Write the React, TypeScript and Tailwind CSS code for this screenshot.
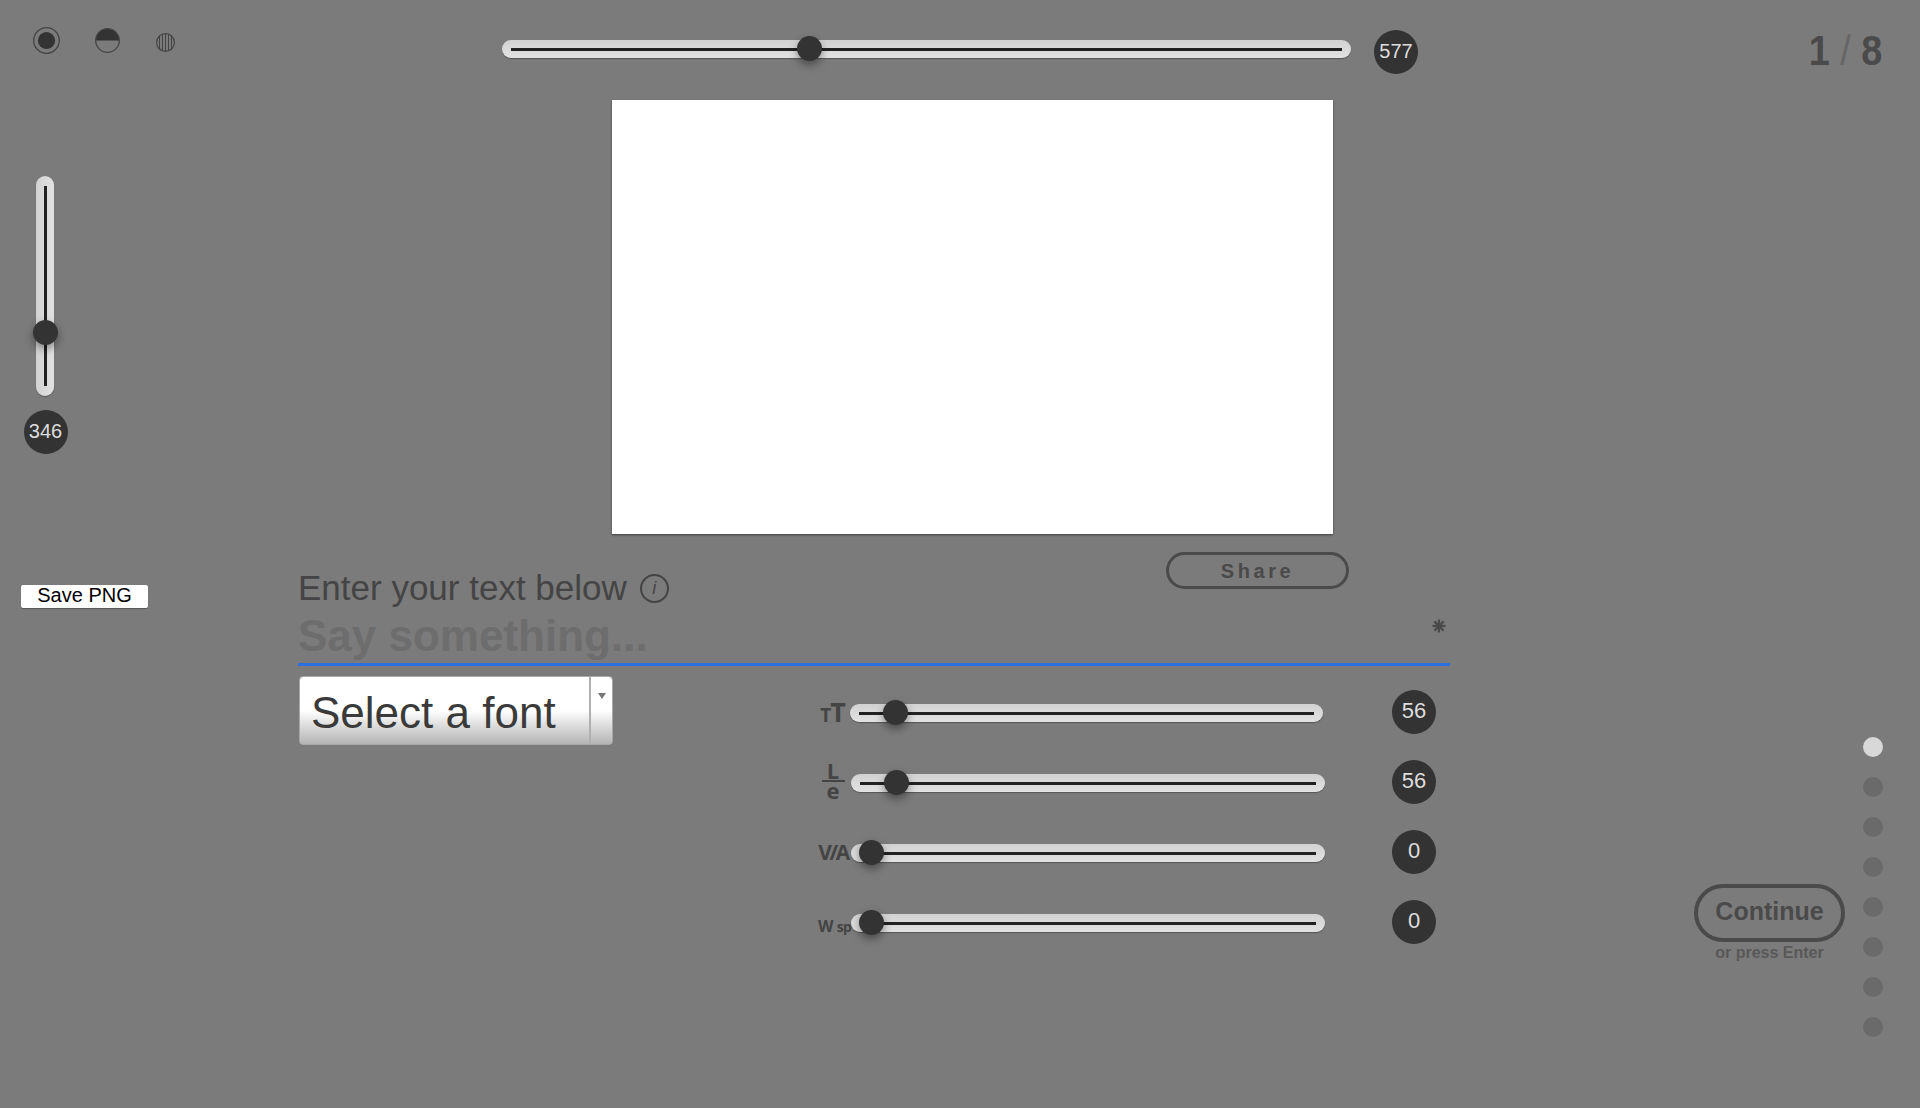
const Bubble = ({ value, small }: { value: string; small?: boolean }) => (
  <div
    className={`flex h-11 w-11 shrink-0 items-center justify-center rounded-full bg-[#333333] pb-[3px] text-[#dddddd] ${
      small ? "text-[20px]" : "text-[22px]"
    }`}
  >
    {value}
  </div>
);

const Knob = ({ className }: { className: string }) => (
  <div className={`absolute h-[25px] w-[25px] rounded-full bg-[#333333] shadow-[0_4px_9px_rgba(0,0,0,0.4)] ${className}`} />
);

const HSlider = ({ width, knob }: { width: string; knob: string }) => (
  <div className={`relative flex h-[18px] shrink-0 items-center rounded-full bg-[linear-gradient(#d2d2d2,#e2e2e2)] px-[9px] shadow-[0_1px_1px_rgba(0,0,0,0.3)] ${width}`}>
    <div className="h-[3px] w-full bg-[#222222]" />
    <Knob className={`top-[-4px] ${knob}`} />
  </div>
);

const ModeIcons = () => (
  <div className="flex items-start pl-[33px] pt-[27px]">
    <svg width="27" height="27" viewBox="0 0 27 27">
      <circle cx="13.5" cy="13.5" r="12.8" fill="none" stroke="#444444" strokeWidth="1.3" />
      <circle cx="13.5" cy="13.5" r="8.6" fill="#333333" />
    </svg>
    <svg className="ml-[35px] mt-px" width="25" height="25" viewBox="0 0 25 25">
      <path d="M0.7 12.5a11.8 11.8 0 0 1 23.6 0z" fill="#333333" />
      <circle cx="12.5" cy="12.5" r="11.8" fill="none" stroke="#444444" strokeWidth="1.3" />
    </svg>
    <svg className="ml-9 mt-[6px]" width="19" height="19" viewBox="0 0 19 19">
      <g stroke="#444444" strokeWidth="1">
        <line x1="3.5" y1="2" x2="3.5" y2="17" />
        <line x1="6.5" y1="1" x2="6.5" y2="18" />
        <line x1="9.5" y1="0.5" x2="9.5" y2="18.5" />
        <line x1="12.5" y1="1" x2="12.5" y2="18" />
        <line x1="15.5" y1="2" x2="15.5" y2="17" />
      </g>
      <circle cx="9.5" cy="9.5" r="8.9" fill="none" stroke="#444444" strokeWidth="1.2" />
    </svg>
  </div>
);

const LeftRail = () => (
  <div className="w-[298px] shrink-0">
    <ModeIcons />
    <div className="relative ml-9 mt-[122px] flex h-[220px] w-[18px] justify-center rounded-full bg-[linear-gradient(90deg,#d2d2d2,#e2e2e2)] py-[10px] shadow-[0_1px_1px_rgba(0,0,0,0.3)]">
      <div className="h-full w-[3px] bg-[#222222]" />
      <Knob className="left-[-3.5px] top-[143.5px]" />
    </div>
    <div className="ml-[23.5px] mt-[14px]">
      <Bubble value="346" small />
    </div>
    <button className="ml-[21px] mt-[131px] block h-[23px] w-[127px] rounded-[2px] bg-white pb-[3px] text-[20px] leading-[20px] text-black shadow-[0_1px_1px_rgba(0,0,0,0.3)]">
      Save PNG
    </button>
  </div>
);

const rows = [
  {
    label: (
      <div className="flex items-baseline justify-center pb-px font-['Open_Sans',sans-serif] font-bold leading-none">
        <span className="text-[19px]">T</span>
        <span className="ml-[-1px] text-[27px]">T</span>
      </div>
    ),
    value: "56",
    track: "w-[473px]",
    knob: "left-[33px]",
    gap: "ml-[69px]",
    offset: "",
  },
  {
    label: (
      <div className="flex flex-col items-center pb-[5px] font-['Open_Sans',sans-serif] font-bold">
        <span className="text-[22px] leading-[19px]">L</span>
        <div className="h-0.5 w-[23px] bg-[#444444]" />
        <span className="text-[22px] leading-[16px]">e</span>
      </div>
    ),
    value: "56",
    track: "w-[474px]",
    knob: "left-[33px]",
    gap: "ml-[67px]",
    offset: "ml-px",
  },
  {
    label: (
      <div className="whitespace-nowrap text-center font-['Open_Sans',sans-serif] text-[21px] font-bold leading-none tracking-[-2.5px]">V/A</div>
    ),
    value: "0",
    track: "w-[474px]",
    knob: "left-[8px]",
    gap: "ml-[67px]",
    offset: "ml-px",
  },
  {
    label: (
      <div className="whitespace-nowrap pt-[7px] text-center font-['Open_Sans',sans-serif] text-[16px] font-bold leading-none tracking-[-0.5px]">
        W <span className="text-[14px]">sp</span>
      </div>
    ),
    value: "0",
    track: "w-[474px]",
    knob: "left-[8px]",
    gap: "ml-[67px]",
    offset: "ml-px",
  },
];

const FontSelect = () => (
  <button className="ml-px flex h-[69px] w-[314px] shrink-0 rounded-[4px] border border-[#a8a8a8] bg-gradient-to-b from-white via-white via-50% to-[#b4b4b4] text-[#3a3a3a]">
    <span className="flex-1 pl-[11px] pt-[7px] text-left text-[44px] leading-[58px]">Select a font</span>
    <span className="flex w-[23px] justify-center border-l-2 border-[#b0b0b0] pt-4">
      <span className="h-0 w-0 border-x-4 border-t-[6px] border-x-transparent border-t-[#777777]" />
    </span>
  </button>
);

const Center = () => (
  <div className="w-[1152px] shrink-0">
    <div className="flex items-start pl-[204px] pt-[30px]">
      <div className="mt-[10px]">
        <HSlider width="w-[849px]" knob="left-[295px]" />
      </div>
      <div className="ml-[23px]">
        <Bubble value="577" small />
      </div>
    </div>

    <div className="ml-[314px] mt-[26px] h-[434px] w-[721px] bg-white shadow-[0_1px_2px_rgba(0,0,0,0.5)]" />

    <div className="flex items-start justify-between pr-[101px]">
      <div className="mt-[34px] flex items-center">
        <h1 className="text-[35px] font-normal leading-10 text-[#444444]">Enter your text below</h1>
        <div className="ml-[13px] flex h-[29px] w-[29px] items-center justify-center rounded-full border-2 border-[#444444] text-[18px] italic text-[#444444]">
          i
        </div>
      </div>
      <button className="mt-[18px] h-[37px] w-[183px] rounded-full border-[3px] border-[#4a4a4a] text-[20px] font-bold tracking-[3.6px] text-[#4a4a4a]">
        Share
      </button>
    </div>

    <div className="relative mt-1">
      <input
        placeholder="Say something..."
        className="block h-[54px] w-full border-b-[3px] border-[#2b6fe0] bg-transparent pb-[3px] text-[44px] font-bold leading-[50px] outline-none placeholder:text-[#6d6d6d]"
      />
      <svg className="absolute right-[4px] top-[7px]" width="14" height="14" viewBox="0 0 14 14">
        <g stroke="#4a4a4a" strokeWidth="2.2">
          <line x1="7" y1="0.5" x2="7" y2="13.5" />
          <line x1="0.5" y1="7" x2="13.5" y2="7" />
          <line x1="2.4" y1="2.4" x2="11.6" y2="11.6" />
          <line x1="11.6" y1="2.4" x2="2.4" y2="11.6" />
        </g>
      </svg>
    </div>

    <div className="mt-[10px] flex items-start">
      <FontSelect />
      <div className="ml-[205px] flex flex-col gap-[26px] pt-[14px] text-[#444444]">
        {rows.map((row, i) => (
          <div key={i} className="flex h-11 items-center">
            <div className="w-8 shrink-0 pr-0.5">{row.label}</div>
            <div className={`translate-y-px ${row.offset}`}>
              <HSlider width={row.track} knob={row.knob} />
            </div>
            <div className={row.gap}>
              <Bubble value={row.value} />
            </div>
          </div>
        ))}
      </div>
    </div>
  </div>
);

const RightRail = () => (
  <div className="flex-1">
    <div className="origin-right scale-x-90 pr-[42px] pt-[28px] text-right text-[42px] leading-[46px] text-[#4a4a4a]">
      <span className="font-bold">1</span>
      <span className="text-[#666666]"> / </span>
      <span className="font-bold">8</span>
    </div>
    <div className="mt-[663px] flex justify-end gap-[18px] pr-[37px]">
      <div className="mt-[147px] w-[151px] text-center">
        <button className="block h-[58px] w-full rounded-full border-4 border-[#4a4a4a] pb-0.5 text-[25px] font-bold text-[#4a4a4a]">
          Continue
        </button>
        <div className="text-[16px] font-bold leading-[22px] text-[#585858]">or press Enter</div>
      </div>
      <div className="flex flex-col gap-5">
        {[0, 1, 2, 3, 4, 5, 6, 7].map((n) => (
          <div key={n} className={`h-5 w-5 rounded-full ${n === 0 ? "bg-[#d8d8d8]" : "bg-[#6a6a6a]"}`} />
        ))}
      </div>
    </div>
  </div>
);

export default function App() {
  return (
    <div className="flex h-[1108px] w-full overflow-hidden bg-[#7b7b7b] font-['Liberation_Sans',Arial,sans-serif]">
      <LeftRail />
      <Center />
      <RightRail />
    </div>
  );
}
